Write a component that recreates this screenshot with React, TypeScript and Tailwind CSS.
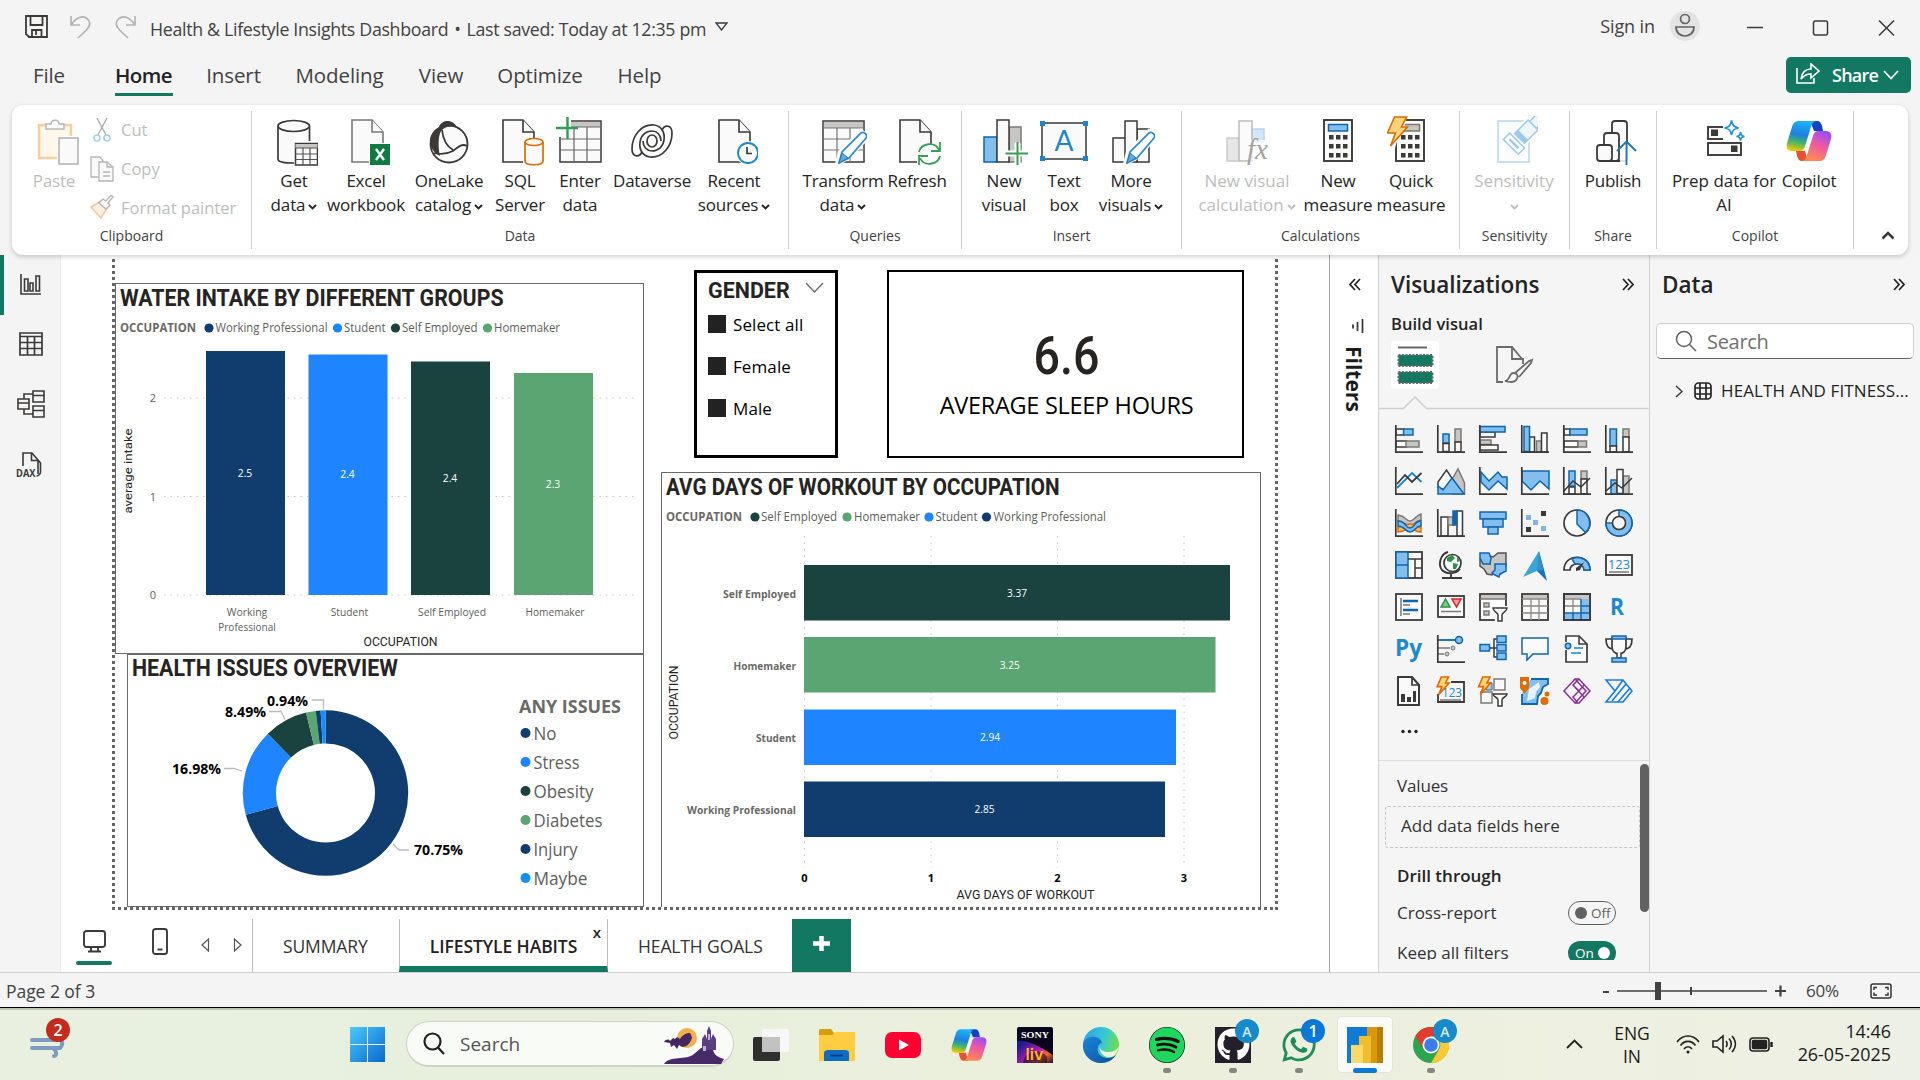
import React from "react";
import { FaGithub, FaWhatsapp, FaSpotify } from "react-icons/fa6";

const K = "#3b3a39";
const B = "#0f66b0";
const F = "#83beec";
const G = "#7a7977";
const L = "#c8c6c4";
const W = "#fafafa";
const NAVY = "#103d6d";
const BLUE = "#1f84ff";
const DARK = "#1a423f";
const GREEN = "#5aa572";
const TEAL = "#127862";

type Kids = { children?: React.ReactNode };

/* ---------- shared drawing helpers ---------- */

function Bx({ r, f = W, s = K, sw = 1.5 }: { r: number[]; f?: string; s?: string; sw?: number }) {
  return <rect x={r[0]} y={r[1]} width={r[2]} height={r[3]} fill={f} stroke={s} strokeWidth={sw} />;
}

function Ln({ d, s = K, sw = 1.5, f = "none" }: { d: string; s?: string; sw?: number; f?: string }) {
  return <path d={d} fill={f} stroke={s} strokeWidth={sw} />;
}

function Txt({
  x, y, w, size, children, fill = "#605e5c", weight = 400, anchor = "start", font = "Open Sans",
}: {
  x: number; y: number; w?: number; size: number; children: string; fill?: string; weight?: number;
  anchor?: "start" | "middle" | "end"; font?: string;
}) {
  return (
    <text
      x={x} y={y} fontSize={size} fill={fill} fontWeight={weight} textAnchor={anchor}
      fontFamily={`${font}, sans-serif`} textLength={w} lengthAdjust="spacingAndGlyphs"
    >
      {children}
    </text>
  );
}

function Page({ x = 9, y = 4, w = 31, s = K }: { x?: number; y?: number; w?: number; s?: string }) {
  const h = 42;
  return (
    <g fill={W} stroke={s} strokeWidth="1.6">
      <path d={`M${x} ${y}h${w - 11}l11 12v${h - 12}h${-w}z`} />
      <path d={`M${x + w - 11} ${y}v12h11`} />
    </g>
  );
}

function Bolt({ x, y, k = 1 }: { x: number; y: number; k?: number }) {
  return (
    <path
      transform={`translate(${x} ${y}) scale(${k})`}
      d="M8 0h12l-5 10h6L4 29l5-13H1z" fill="#fcd37a" stroke="#de6c00" strokeWidth={1.6 / k}
    />
  );
}

function Copilot({ className, id }: { className: string; id: string }) {
  return (
    <svg className={className} viewBox="0 0 46 42">
      <defs>
        <linearGradient id={`${id}a`} x1="0.5" y1="0" x2="0.3" y2="1">
          <stop offset="0" stopColor="#1fb4f4" /><stop offset="0.45" stopColor="#1b7fe0" />
          <stop offset="0.7" stopColor="#3fb56c" /><stop offset="1" stopColor="#f6c800" />
        </linearGradient>
        <linearGradient id={`${id}b`} x1="0.7" y1="0" x2="0.3" y2="1">
          <stop offset="0" stopColor="#9a4df5" /><stop offset="0.45" stopColor="#ef5aa0" />
          <stop offset="1" stopColor="#ff8f4a" />
        </linearGradient>
      </defs>
      <path d="M24 1h7c3 0 4 2 5 5l1 5h-9z" fill="#1542c0" />
      <path d="M22 41h-6c-3 0-4-2-5-5l-1-5h9z" fill="#e8502f" />
      <path d="M13 1h18c-4 0-5 3-6 6l-6 19c-1 4-3 5-6 5H6c-5 0-6-4-5-8L6 7c1-4 3-6 7-6z" fill={`url(#${id}a)`} />
      <path d="M33 41H15c4 0 5-3 6-6l6-19c1-4 3-5 6-5h7c5 0 6 4 5 8l-5 16c-1 4-3 6-7 6z" fill={`url(#${id}b)`} />
      <path d="M24 12h7c-4 0-4 2-5 5l-4 12h-5c3 0 3-2 4-5z" fill="#fff" />
    </svg>
  );
}

/* ---------- ribbon icons, 48 x 50 ---------- */

const Ri = ({ children }: Kids) => <svg className="h-[50px] w-12 shrink-0" viewBox="0 0 48 50">{children}</svg>;

const icoPaste = (
  <Ri>
    <path d="M8 9h32v33H8z" fill="#fff7ea" stroke="#f6cfa0" strokeWidth="2.5" />
    <path d="M15 13V8h5c0-5 8-5 8 0h5v5z" fill={W} stroke="#b9b9b9" strokeWidth="1.5" />
    <rect x="26" y="20" width="22" height="28" fill="#fff" />
    <rect x="28" y="22" width="19" height="26" fill={W} stroke="#b0b0b0" strokeWidth="1.5" />
  </Ri>
);
const icoGet = (
  <Ri>
    <path d="M8 10v33c0 3 6 4 16 4V10z" fill={W} /><path d="M24 47C14 47 8 46 8 43V10M39.500 10v15" fill="none" stroke={K} strokeWidth="1.7" />
    <ellipse cx="23.700" cy="10" rx="15.700" ry="5.500" fill={W} stroke={K} strokeWidth="1.700" />
    <rect x="24" y="27" width="24" height="23" fill="#fff" /><Bx r={[25.500, 27.500, 22, 21.500]} /><path d="M25.500 28h22v4h-22z" fill={L} />
    <Ln d="M25.500 32h22M25.500 38h22M25.500 43.500h22M33 32v17M40 32v17" sw={1.200} s="#555" />
  </Ri>
);
const icoExcel = (
  <Ri><Page x={10} w={31} s={G} /><rect x="27" y="27" width="21" height="23" fill="#fff" /><rect x="28" y="28" width="20" height="21" fill="#107c41" />
    <Ln d="M34 33l8 11M42 33l-8 11" s="#fff" sw={2.400} /></Ri>
);
const icoLake = (
  <Ri>
    <circle cx="24" cy="28" r="18.500" fill={W} stroke={K} strokeWidth="1.800" />
    <path d="M14 11C17 3 29 3 32 12c-6-3-13-1-16 3-3 5-3 17-1 25C3 34 1 18 14 11z" fill={K} />
    <path d="M17 14c1 10 6 17 11 20M9 37c8 2 13 1 19-2 5-4 9-8 14-5" fill="none" stroke={K} strokeWidth="1.800" />
  </Ri>
);
const icoSql = (
  <Ri><Page x={7} w={31} /><path d="M27 24h21v26H27z" fill="#fff" /><path d="M29 26v19c0 5 18 5 18 0V26" fill={W} stroke="#de6c00" strokeWidth="1.700" />
    <ellipse cx="38" cy="26" rx="9" ry="3.500" fill={W} stroke="#de6c00" strokeWidth="1.700" /></Ri>
);
const icoEnter = (
  <Ri><Bx r={[4, 5, 41, 41]} /><path d="M5 6h39v5H5z" fill={L} /><Ln d="M4 11h41M4 23h41M4 34h41M18 11v35M31 11v35" sw={1.200} s="#666" />
    <path d="M0 1h15v20H0z" fill="#fff" /><Ln d="M11.500 1v22M0 12h22" s="#2f9e4f" sw={2.400} /></Ri>
);
const icoDv = (
  <Ri><g fill="none" stroke={K} strokeWidth="1.700">
    <ellipse cx="24" cy="25" rx="5" ry="6" fill={W} />
    <path d="M26 9C13 8 4 20 4 33c0 8 7 9 10 3M22 41c13 1 22-11 22-24 0-8-7-9-10-3" />
    <path d="M26 9c8 1 11 8 10 15-1 7-6 11-12 11-5 0-9-4-9-10M22 41c-8-1-11-8-10-15 1-7 6-11 12-11 5 0 9 4 9 10" />
  </g></Ri>
);
const icoRecent = (
  <Ri><Page x={9} w={31} /><circle cx="38" cy="37" r="12" fill="#fff" /><circle cx="38" cy="37" r="10" fill={W} stroke="#1b86cc" strokeWidth="1.800" />
    <Ln d="M37 31v6.500h5" sw={1.700} /></Ri>
);
const Pencil = () => (
  <g><path d="M18 48l3-12L42 15l7 6-20 21z" fill="#fff" stroke="#fff" strokeWidth="4" /><path d="M20 47l3-11L42 17c3-2 7 2 5 5L30 42z" fill={W} stroke="#2a8ad0" strokeWidth="1.700" /><path d="M20 47l3-10 6 5z" fill="#5eabe4" stroke="#1b78c0" /></g>
);
const icoTransform = (
  <Ri><Bx r={[4, 5, 41, 41]} /><path d="M5 6h39v6H5z" fill={L} /><Ln d="M4 12h41M4 23h41M4 34h41M18 12v34M31 12v34" sw={1.200} s="#777" /><Pencil /></Ri>
);
const icoRefresh = (
  <Ri><Page x={7} w={31} /><path d="M24 28h24v22H24z" fill="#fff" /><Ln d="M26 36c2-9 16-11 20-2M47 26v9h-9M47 40c-2 9-16 11-20 2M26 49v-9h9" s="#3a9d57" sw={1.800} /></Ri>
);
const icoNewVisual = (
  <Ri><Bx r={[4, 21, 13, 25]} f={F} s={B} /><Bx r={[29, 11, 12, 35]} f={L} s={G} /><Bx r={[17, 4, 12, 42]} />
    <path d="M35 27h5v23h-5zM24 35h24v5H24z" fill="#fff" stroke="#fff" /><Ln d="M37.500 26v23M25.500 37.500h23" s="#3a9d57" sw={2} /></Ri>
);
const icoTextBox = (
  <Ri><Bx r={[2, 7, 44, 36]} />
    {[[0, 5], [43, 5], [0, 40], [43, 40]].map(([x, y]) => <rect key={`${x}${y}`} x={x} y={y} width="5" height="5" fill="#1b86cc" />)}
    <Txt x={24} y={35} size={28} fill="#1b86cc" anchor="middle" font="Lato">A</Txt></Ri>
);
const icoMore = (
  <Ri><Bx r={[6, 22, 13, 24]} /><Bx r={[30, 13, 12, 33]} /><Bx r={[18, 5, 12, 41]} /><Pencil /></Ri>
);
const icoCalc = (
  <Ri><g opacity="0.75"><Bx r={[4, 22, 12, 23]} f="#dedede" s="#bbb" /><Bx r={[29, 13, 12, 13]} f="#c3dff5" s="#9cc8ea" /><Bx r={[16, 5, 13, 40]} s="#a5a5a5" /></g>
    <path d="M25 24h23v24H25z" fill="#fff" opacity="0.7" /><text x="24" y="43" fontSize="29" fontStyle="italic" fill="#a3a3a3" fontFamily="Liberation Serif, serif">fx</text></Ri>
);
const Calc = ({ x, blue }: { x: number; blue?: boolean }) => (
  <g><Bx r={[x, 4, 28, 41]} sw={1.900} /><Bx r={[x + 4.500, 8.500, 19, 6.500]} f={blue ? F : L} s={blue ? B : G} />
    {[19, 28, 37].map((y) => [5, 12, 19].map((q) => <rect key={`${y}${q}`} x={x + q} y={y} width="4.500" height="4.500" fill={K} />))}</g>
);
const icoMeasure = <Ri><Calc x={10} blue /></Ri>;
const icoQuick = <Ri><Calc x={9} /><path d="M-2 0h22l-3 12h-3L8 32H-2z" fill="#fff" /><Bolt x={-0.500} y={1} /></Ri>;
const icoSens = (
  <Ri><path d="M8 5h31v41H8z" fill="#fafcfe" stroke="#b5d6ee" strokeWidth="1.500" />
    <g transform="rotate(45 36 16)"><path d="M29 6h14v19H29z" fill="#eef6fc" stroke="#fff" strokeWidth="5" /><path d="M31-4h10v10H31z" fill="#eef6fc" stroke="#9ccaea" strokeWidth="1.500" /><path d="M29 6h14v19H29z" fill="#eef6fc" stroke="#9ccaea" strokeWidth="1.500" /><path d="M29 20h14v5H29z" fill="#9ccaea" /></g>
    <g transform="rotate(45 24 27)"><rect x="14" y="23" width="21" height="9" fill="#fff" stroke="#9ccaea" strokeWidth="1.500" /><Ln d="M18 27.500h13" s="#9ccaea" sw={2.500} /></g></Ri>
);
const icoPublish = (
  <Ri><g fill={W} stroke={K} strokeWidth="1.800"><rect x="23" y="5" width="15" height="40" rx="3" /><rect x="15" y="17" width="15" height="28" rx="3" /><rect x="8" y="29" width="15" height="16" rx="3" /></g>
    <path d="M31 26h16v22H31z" fill="#fff" opacity="0.85" /><Ln d="M37.500 49V26M28 35l9.500-9.500L47 35" s="#1b78b8" sw={1.900} /></Ri>
);
const icoPrep = (
  <Ri><Bx r={[8, 11, 33, 12]} sw={1.900} /><Bx r={[8, 27, 33, 12]} sw={1.900} /><path d="M11 13.500h7v6.500h-7zM31 29.500h6.500v6.500H31z" fill={K} />
    <path d="M23 4h22v20H23z" fill="#fff" /><path d="M31.500 4.500c1 5 2 6 7 7.500-5 1-6 2-7 7-1-5-2-6-7-7 5-1 6-2 7-7.500zM40.500 16c.7 3 1 4 4 4.500-3 .6-3.500 1-4 4-.6-3-1-3.500-4-4 3-.6 3.500-1 4-4.500z" fill="#fff" stroke="#1f93d8" strokeWidth="1.700" /></Ri>
);

/* ---------- ribbon ---------- */

function Caret({ className = "" }: { className?: string }) {
  return <svg className={`inline-block h-[6px] w-[9px] ${className}`} viewBox="0 0 9 6"><path d="M1 1l3.500 3.500L8 1" fill="none" stroke="currentColor" strokeWidth="1.900" /></svg>;
}

function Btn({ icon, a, b, caret, cls }: { icon: React.ReactNode; a: string; b?: string; caret?: boolean; cls: string }) {
  return (
    <button className={`flex shrink-0 flex-col items-center whitespace-nowrap text-[17px] leading-6 ${cls}`}>
      {icon}
      <span className="mt-[3px] tracking-[-0.22px]">{a}</span>
      <span className="flex h-6 items-center justify-center gap-[3px] tracking-[-0.12px]">{b}{caret && <Caret className="mt-[3px]" />}</span>
    </button>
  );
}

function Group({ label, cls, children }: Kids & { label: string; cls: string }) {
  return (
    <section className={`my-[6px] flex shrink-0 flex-col border-r border-[#d1d1d1] ${cls}`}>
      <div className="flex h-[113px] pt-[5px]">{children}</div>
      <div className="text-center text-[14px] leading-6 text-[#424242]">{label}</div>
    </section>
  );
}

function Ribbon() {
  return (
    <div className="relative z-10 mx-3 flex h-[150px] rounded-[11px] bg-white text-[#242424] shadow-[0_2px_5px_rgba(0,0,0,0.18)]">
      <Group label="Clipboard" cls="w-[240px]">
        <Btn icon={icoPaste} a="Paste" cls="ml-[12px] w-[60px] text-[#bdbdbd] [&>svg]:ml-[2px]" />
        <div className="ml-[6px] flex flex-col pt-px text-[16.500px] text-[#bdbdbd]">
          <div className="flex h-[39px] items-start gap-[7px]">
            <svg className="h-[26px] w-[24px]" viewBox="0 0 24 26"><Ln d="M7 1l9 17M17 1L8 18" s="#a9a9a9" sw={1.300} /><circle cx="7" cy="21" r="3" fill="none" stroke="#a6cfea" strokeWidth="1.600" /><circle cx="17" cy="21" r="3" fill="none" stroke="#a6cfea" strokeWidth="1.600" /></svg><span className="mt-px">Cut</span>
          </div>
          <div className="flex h-[39px] items-start gap-[7px]">
            <svg className="h-[26px] w-[24px]" viewBox="0 0 24 26"><path d="M1 1h9l3 4v16H1z" fill={W} stroke="#b5b5b5" strokeWidth="1.300" /><path d="M9 6h8l6 5v14H9z" fill={W} stroke="#b5b5b5" strokeWidth="1.300" /><Ln d="M17 6v5h6M13 16h7M13 20h7" s="#b5b5b5" sw={1.300} /></svg><span className="mt-px">Copy</span>
          </div>
          <div className="flex items-start gap-[7px]">
            <svg className="h-[24px] w-[24px]" viewBox="0 0 24 24"><path d="M1 12l10-6 6 7-6 10z" fill="#fdf0e2" stroke="#f4c79c" strokeWidth="1.500" /><path d="M9 8l4-4 3 2 5-6 2 2-5 6 2 2-4 4z" fill={W} stroke="#b5b5b5" strokeWidth="1.300" /></svg><span className="mt-px">Format painter</span>
          </div>
        </div>
      </Group>
      <Group label="Data" cls="w-[537px]">
        <Btn icon={icoGet} a="Get" b="data" caret cls="ml-[12px] w-[60px]" />
        <Btn icon={icoExcel} a="Excel" b="workbook" cls="ml-[2px] w-[80px]" />
        <Btn icon={icoLake} a="OneLake" b="catalog" caret cls="ml-[3px] w-[80px]" />
        <Btn icon={icoSql} a="SQL" b="Server" cls="ml-px w-[60px]" />
        <Btn icon={icoEnter} a="Enter" b="data" cls="ml-[3px] w-[54px]" />
        <Btn icon={icoDv} a="Dataverse" cls="ml-[5px] w-[80px]" />
        <Btn icon={icoRecent} a="Recent" b="sources" caret cls="ml-[2px] w-[80px]" />
      </Group>
      <Group label="Queries" cls="w-[173px]">
        <Btn icon={icoTransform} a="Transform" b="data" caret cls="ml-[12px] w-[84px]" />
        <Btn icon={icoRefresh} a="Refresh" cls="ml-px w-[62px]" />
      </Group>
      <Group label="Insert" cls="w-[220px]">
        <Btn icon={icoNewVisual} a="New" b="visual" cls="ml-[14px] w-[56px]" />
        <Btn icon={icoTextBox} a="Text" b="box" cls="ml-[7px] w-[50px]" />
        <Btn icon={icoMore} a="More" b="visuals" caret cls="ml-[7px] w-[70px]" />
      </Group>
      <Group label="Calculations" cls="w-[278px]">
        <Btn icon={icoCalc} a="New visual" b="calculation" caret cls="ml-[13px] w-[104px] text-[#bdbdbd] [&>span]:tracking-normal" />
        <Btn icon={icoMeasure} a="New" b="measure" cls="ml-[3px] w-[72px]" />
        <Btn icon={icoQuick} a="Quick" b="measure" cls="ml-[2px] w-[70px]" />
      </Group>
      <Group label="Sensitivity" cls="w-[110px]">
        <Btn icon={icoSens} a="Sensitivity" caret cls="ml-[9px] w-[90px] text-[#bdbdbd] [&>span]:tracking-normal" />
      </Group>
      <Group label="Share" cls="w-[87px]">
        <Btn icon={icoPublish} a="Publish" cls="ml-[8px] w-[70px]" />
      </Group>
      <Group label="Copilot" cls="w-[197px]">
        <Btn icon={icoPrep} a="Prep data for" b="AI" cls="ml-[12px] w-[110px] [&>span]:tracking-normal" />
        <Btn icon={<Copilot id="rib" className="mt-[4px] mb-[4px] h-[42px] w-[46px]" />} a="Copilot" cls="ml-0 w-[60px]" />
      </Group>
      <svg className="mt-[126px] ml-[27px] h-[9px] w-[14px]" viewBox="0 0 14 9"><path d="M1.500 7.500L7 2l5.500 5.500" fill="none" stroke={K} strokeWidth="2.500" /></svg>
    </div>
  );
}

/* ---------- title bar and menu ---------- */

function TitleBar() {
  return (
    <header className="flex h-14 shrink-0 items-start text-[#424242]">
      <svg className="mt-[15px] ml-[25px] h-[23px] w-[23px]" viewBox="0 0 23 23" fill="none" stroke={K} strokeWidth="1.800"><path d="M1 1h21v21H4l-3-3z" /><path d="M5.500 1v9h12V1M7 22v-7h9.500v7M11 15v5" /></svg>
      <svg className="mt-[15px] ml-[22px] h-[24px] w-[22px]" viewBox="0 0 22 24" fill="none" stroke="#b3b3b3" strokeWidth="1.700"><path d="M1 1v9h9M1.500 9.500C6 2 13 0 17.500 4c4 4 2 8-1 11L8 23" /></svg>
      <svg className="mt-[15px] ml-[22px] h-[24px] w-[22px]" viewBox="0 0 22 24" fill="none" stroke="#b3b3b3" strokeWidth="1.700"><path d="M21 1v9h-9M20.500 9.500C16 2 9 0 4.500 4c-4 4-2 8 1 11L14 23" /></svg>
      <div className="mt-[15px] ml-[14px] flex text-[17.800px] leading-7 tracking-[-0.320px] whitespace-nowrap">
        <span>Health &amp; Lifestyle Insights Dashboard</span><span className="mx-[6px]">•</span><span>Last saved: Today at 12:35 pm</span>
      </div>
      <svg className="mt-[22px] ml-[9px] h-[9px] w-[13px]" viewBox="0 0 13 9" fill="none" stroke={K} strokeWidth="1.300"><path d="M1 1h11L6.500 8z" /></svg>
      <div className="mt-[12px] ml-auto text-[18px] leading-7 tracking-[-0.100px]">Sign in</div>
      <div className="mt-[11px] ml-[15px] flex h-[30px] w-[30px] justify-center rounded-full bg-[#e3e3e3] pt-[2px]">
        <svg className="h-[25px] w-[20px]" viewBox="0 0 20 25" fill="none" stroke="#616161" strokeWidth="1.700"><circle cx="10" cy="6" r="4.500" /><path d="M1 14h18c0 12-18 12-18 0z" /></svg>
      </div>
      <svg className="mt-[20px] ml-[46px] mr-[25px] h-[16px] w-[149px]" viewBox="0 0 149 16" fill="none" stroke={K} strokeWidth="1.500"><path d="M1 7.500h16M133 .5l15 15M148 .5l-15 15" /><rect x="67.500" y="1" width="14" height="14" rx="2" /></svg>
    </header>
  );
}

function Menu() {
  const items: [string, string][] = [
    ["File", "ml-[34px] w-[30px]"], ["Home", "ml-[51px] w-[58px]"], ["Insert", "ml-[35px] w-[51px]"], ["Modeling", "ml-[37px] w-[87px]"],
    ["View", "ml-[36px] w-[44px]"], ["Optimize", "ml-[35px] w-[84px]"], ["Help", "ml-[36px] w-[43px]"],
  ];
  return (
    <nav className="mb-[8px] flex h-[41px] shrink-0 items-start text-[20.500px] leading-[38px] tracking-[-0.1px] whitespace-nowrap text-[#424242]">
      {items.map(([t, c]) => (
        <div key={t} className={`flex h-[41px] justify-center ${c} ${t === "Home" ? "font-semibold tracking-[-0.6px] text-[#242424]" : ""}`}>
          {t === "Home" ? <span className="h-[40px] w-[58px] border-b-[3px] border-[#127862]">{t}</span> : t}
        </div>
      ))}
      <button className="mt-px mr-[9px] ml-auto flex h-[36px] w-[125px] items-center rounded-[5px] bg-[#127862] pl-[10px] text-[18px] font-semibold tracking-[-0.75px] text-white">
        <svg className="mb-[3px] h-[21px] w-[24px]" viewBox="0 0 24 21" fill="none" stroke="#fff" strokeWidth="1.600"><path d="M1 5v15h17v-5" /><path d="M5 16C6 9 10 6 15 6V1l8 7-8 7v-4c-4 0-7 1-10 5z" /></svg>
        <span className="ml-[12px] w-[46px] text-left">Share</span>
        <svg className="ml-[5px] h-[10px] w-[16px]" viewBox="0 0 16 10" fill="none" stroke="#fff" strokeWidth="1.800"><path d="M1 1l7 7.500L15 1" /></svg>
      </button>
    </nav>
  );
}

/* ---------- left rail ---------- */

function Rail() {
  return (
    <aside className="flex w-[61px] shrink-0 flex-col border-r border-[#ebebeb] bg-[#f4f4f4]">
      <div className="flex h-[60px] items-start border-l-[4px] border-[#127862] pt-[19px] pl-[16px]">
        <svg className="h-[21px] w-[21px]" viewBox="0 0 21 21" fill="none" stroke={K} strokeWidth="1.600"><path d="M1 0v20h20M4.500 5h3.500v12H4.500zM10 9h3v8h-3zM16 2h3.500v15H16z" /></svg>
      </div>
      <svg className="mt-[17px] ml-[19px] h-[24px] w-[24px]" viewBox="0 0 24 24" fill="none" stroke={K} strokeWidth="1.700"><path d="M1 1h22v22H1zM1 4.500h22M1 10.500h22M1 16.500h22M8.500 4.500V23M15.500 4.500V23" /></svg>
      <svg className="mt-[34px] ml-[17px] h-[28px] w-[28px]" viewBox="0 0 28 28" fill="none" stroke={K} strokeWidth="1.600"><path d="M1 9h11v10H1zM1 13h11M16 1h11v11H16zM16 5.500h11M16 16h11v11H16zM16 20.500h11M7 9V4h9M7 19v5h9" /></svg>
      <svg className="mt-[34px] ml-[15px] h-[26px] w-[28px] overflow-visible" viewBox="0 0 28 26" fill="none" stroke={K} strokeWidth="1.600"><path d="M8 14V1h9l6 7v14M16.500 1v7.500H23M23 8l2.500 3v9c0 2-2 4-4 4" /><text x="1" y="24.500" fontSize="10.500" fontWeight="700" stroke="none" fill={K} textLength="19.500" lengthAdjust="spacingAndGlyphs" fontFamily="Open Sans, sans-serif">DAX</text></svg>
    </aside>
  );
}

/* ---------- report visuals ---------- */

const DIN = "origin-left font-['Roboto'] font-bold text-[#252423] whitespace-nowrap";

function Legend({ items, cls }: { items: [string, string, number, number, number][]; cls: string }) {
  return (
    <svg className={cls} viewBox="0 0 500 18">
      <Txt x={0} y={13} w={76} size={11.500} weight={700} fill="#6b6967">OCCUPATION</Txt>
      {items.map(([t, c, dot, x, w]) => (
        <g key={t}><circle cx={dot} cy="9" r="4.600" fill={c} /><Txt x={x} y={13} w={w} size={11.800}>{t}</Txt></g>
      ))}
    </svg>
  );
}

function WaterChart() {
  const bars: [string, string, number, number, string, number][] = [
    ["Working", "2.5", 91, 66, NAVY, 189], ["Student", "2.4", 193.500, 69.500, BLUE, 190],
    ["Self Employed", "2.4", 296, 76.500, DARK, 194], ["Homemaker", "2.3", 399, 88, GREEN, 200],
  ];
  return (
    <article className="h-[372px] w-[529px] border border-[#6b6967] bg-white pt-px pl-[4px]">
      <h3 className={`${DIN} mt-[-2px] scale-x-[0.909] text-[23.500px] leading-[30px]`}>WATER INTAKE BY DIFFERENT GROUPS</h3>
      <Legend cls="mt-[6px] h-[18px] w-[500px]" items={[["Working Professional", NAVY, 89, 95.500, 112], ["Student", BLUE, 217.500, 224, 41.500], ["Self Employed", DARK, 275.500, 282, 75.500], ["Homemaker", GREEN, 367.500, 374, 66]]} />
      <svg className="mt-[-52px] ml-[-5px] h-[368px] w-[525px]" viewBox="0 0 525 368">
        {[113, 211.500, 310].map((y, i) => (
          <g key={y}><line x1="49" x2="521" y1={y} y2={y} stroke="#c8c6c4" strokeWidth="1" strokeDasharray="1.500 5" /><Txt x={41} y={y + 4} size={11} anchor="end">{String(2 - i)}</Txt></g>
        ))}
        {bars.map(([t, v, x, y, c, ty]) => (
          <g key={t}>
            <rect x={x} y={y} width="79" height={310 - y} fill={c} />
            <Txt x={x + 39} y={ty + 3} w={14.500} size={11} fill="#fff" anchor="middle">{v}</Txt>
          </g>
        ))}
        <Txt x={132} y={331} w={40.500} size={10.500} anchor="middle">Working</Txt>
        <Txt x={132} y={346} w={57.500} size={10.500} anchor="middle">Professional</Txt>
        <Txt x={234.500} y={331} w={37.500} size={10.500} anchor="middle">Student</Txt>
        <Txt x={337} y={331} w={68} size={10.500} anchor="middle">Self Employed</Txt>
        <Txt x={440} y={331} w={59} size={10.500} anchor="middle">Homemaker</Txt>
        <Txt x={285.500} y={361} w={74} size={12.500} anchor="middle" font="Roboto" fill="#252423">OCCUPATION</Txt>
        <g transform="translate(17 186) rotate(-90)"><Txt x={0} y={0} w={85} size={11.500} anchor="middle" font="Roboto" fill="#252423">average intake</Txt></g>
      </svg>
    </article>
  );
}

function DonutChart() {
  const parts: [string, number, string][] = [["No", 70.75, NAVY], ["Stress", 16.98, BLUE], ["Obesity", 8.49, DARK], ["Diabetes", 1.89, GREEN], ["Injury", 0.95, NAVY], ["Maybe", 0.94, "#1090ff"]];
  const widths = [23, 46, 60, 69, 44, 54];
  const p = (r: number, t: number) => `${(197.500 + r * Math.sin(t * 2 * Math.PI)).toFixed(2)} ${(138 - r * Math.cos(t * 2 * Math.PI)).toFixed(2)}`;
  let acc = 0;
  return (
    <article className="ml-[12px] h-[253px] w-[517px] border border-[#6b6967] bg-white">
      <h3 className={`${DIN} mt-[-1px] ml-[4px] scale-x-[0.908] text-[23.500px] leading-[28px]`}>HEALTH ISSUES OVERVIEW</h3>
      <svg className="mt-[-27px] h-[251px] w-[515px]" viewBox="0 0 515 251">
        {parts.map(([t, v, c]) => {
          const a = acc / 100, b = (acc + v) / 100;
          acc += v;
          const big = v > 50 ? 1 : 0;
          return <path key={t} d={`M${p(82.700, a)}A82.700 82.700 0 ${big} 1 ${p(82.700, b)}L${p(49.500, b)}A49.500 49.500 0 ${big} 0 ${p(49.500, a)}z`} fill={c} />;
        })}
        <g fill="none" stroke="#bdbbb9" strokeWidth="1.300"><path d="M265 189l6 6h10M96 113.500h10l8 2.500M141 56.500h12l4 8M184 45h11.500v9" /></g>
        <Txt x={286} y={200} w={49} size={13.500} weight={700} fill="#000">70.75%</Txt>
        <Txt x={44} y={119} w={49} size={13.500} weight={700} fill="#000">16.98%</Txt>
        <Txt x={97} y={62} w={41} size={13.500} weight={700} fill="#000">8.49%</Txt>
        <Txt x={139} y={51} w={41} size={13.500} weight={700} fill="#000">0.94%</Txt>
        <Txt x={391} y={58} w={102} size={17} weight={700} fill="#6b6967">ANY ISSUES</Txt>
        {parts.map(([t, , c], i) => (
          <g key={t}><circle cx="397.500" cy={78 + i * 29} r="5" fill={c} /><Txt x={405.500} y={85 + i * 29} w={widths[i]} size={17.500}>{t}</Txt></g>
        ))}
      </svg>
    </article>
  );
}

function WorkoutChart() {
  const rows: [string, string, number, number, string, number][] = [
    ["Self Employed", "3.37", 92, 426, DARK, 73], ["Homemaker", "3.25", 164, 411.500, GREEN, 62.500],
    ["Student", "2.94", 236.500, 372, BLUE, 40], ["Working Professional", "2.85", 308.500, 361, NAVY, 109],
  ];
  return (
    <article className="h-[436px] w-[600px] border border-b-0 border-[#6b6967] bg-white">
      <h3 className={`${DIN} ml-[4px] scale-x-[0.879] text-[23.500px] leading-[28px]`}>AVG DAYS OF WORKOUT BY OCCUPATION</h3>
      <Legend cls="mt-[7px] ml-[4px] h-[18px] w-[500px]" items={[["Self Employed", DARK, 89, 95, 76], ["Homemaker", GREEN, 181, 188, 66], ["Student", BLUE, 263, 269.500, 42], ["Working Professional", NAVY, 320.500, 327.500, 112.500]]} />
      <svg className="mt-[-53px] h-[433px] w-[598px]" viewBox="0 0 598 433">
        {[142.500, 269, 395.500, 522].map((x, i) => (
          <g key={x}><line x1={x} x2={x} y1="63" y2="395" stroke="#c8c6c4" strokeDasharray="1.500 5" /><Txt x={x} y={409} size={11} weight={700} fill="#000" anchor="middle">{String(i)}</Txt></g>
        ))}
        {rows.map(([t, v, y, w, c, tw]) => (
          <g key={t}>
            <rect x="142" y={y} width={w} height="55.500" fill={c} />
            <Txt x={142 + w / 2} y={y + 31.500} w={20} size={11} fill="#fff" anchor="middle">{v}</Txt>
            <Txt x={134} y={y + 32.500} w={tw} size={11} weight={700} anchor="end" fill="#6b6967">{t}</Txt>
          </g>
        ))}
        <Txt x={363.500} y={426} w={138} size={12.500} font="Roboto" anchor="middle" fill="#252423">AVG DAYS OF WORKOUT</Txt>
        <g transform="translate(16 229.500) rotate(-90)"><Txt x={0} y={0} w={74} size={12} font="Roboto" anchor="middle" fill="#252423">OCCUPATION</Txt></g>
      </svg>
    </article>
  );
}

function GenderSlicer() {
  return (
    <article className="h-[188px] w-[144px] border-[3px] border-black bg-white pl-[11px]">
      <div className="flex h-[42px] justify-between pt-[4px]">
        <h3 className={`${DIN} mt-[-1px] w-[94px] scale-x-[0.955] text-[22.500px] leading-[28px]`}>GENDER</h3>
        <svg className="mt-[5px] mr-[11px] h-[11px] w-[19px]" viewBox="0 0 19 11" fill="none" stroke="#6b6967" strokeWidth="1.300"><path d="M1 1l8.500 9L18 1" /></svg>
      </div>
      {["Select all", "Female", "Male"].map((t) => (
        <label key={t} className="flex h-[42px] items-start gap-[7px] text-[17px] leading-[19px] tracking-[0.1px] text-black">
          <span className="h-[18px] w-[18px] bg-[#222]" />{t}
        </label>
      ))}
    </article>
  );
}

function Report() {
  return (
    <div className="flex h-[664px] pl-[51px]">
      <div className="mt-[4px] h-[652px] w-[3px] shrink-0 bg-[repeating-linear-gradient(to_bottom,#666_0_3px,transparent_3px_6px)]" />
      <div className="h-[655px] w-[1160px]">
        <div className="flex h-[652px]">
          <div className="flex w-[529px] flex-col pt-[28px]"><WaterChart /><DonutChart /></div>
          <div className="ml-[17px] flex w-[600px] flex-col pt-[15px]">
            <div className="mb-[14px] ml-[33px] flex gap-[49px]">
              <GenderSlicer />
              <article className="flex h-[188px] w-[357px] flex-col items-center border-2 border-black bg-white pt-[56px] pl-[2px]">
                <div className="scale-x-[0.88] font-['Roboto'] text-[53px] leading-[56px] font-medium text-[#252423]">6.6</div>
                <div className="mt-[5px] text-[23.500px] leading-[32px] tracking-[-0.300px] whitespace-nowrap text-black">AVERAGE SLEEP HOURS</div>
              </article>
            </div>
            <WorkoutChart />
          </div>
        </div>
        <div className="ml-[-3px] h-[3px] w-[1164px] bg-[repeating-linear-gradient(to_right,#666_0_3px,transparent_3px_6px)]" />
      </div>
      <div className="mt-[4px] h-[652px] w-[3px] shrink-0 bg-[repeating-linear-gradient(to_bottom,#666_0_3px,transparent_3px_6px)]" />
    </div>
  );
}

function PageTabs() {
  return (
    <div className="flex h-[53px] text-[17.500px] leading-[55px] tracking-[-0.12px] whitespace-nowrap text-[#333]">
      <div className="ml-[15px] flex w-[36px] flex-col items-center pt-[11px]">
        <svg className="h-[23px] w-[23px]" viewBox="0 0 23 23" fill="none" stroke={K} strokeWidth="1.900"><rect x="1" y="1" width="21" height="16" rx="2.500" /><path d="M8 17v4M15 17v4M5 21.500h13" /></svg>
        <div className="mt-[8px] h-[4px] w-[36px] rounded bg-[#127862]" />
      </div>
      <svg className="mt-[9px] ml-[40px] h-[27px] w-[16px]" viewBox="0 0 16 27" fill="none" stroke={K} strokeWidth="1.900"><rect x="1" y="1" width="14" height="25" rx="2.500" /><path d="M5.500 21.500h5" /></svg>
      <svg className="mt-[19px] ml-[33px] h-[14px] w-[41px]" viewBox="0 0 41 14" fill="none" stroke="#555" strokeWidth="1.200"><path d="M7.500 1v12L1 7zM33.500 1v12L40 7z" /></svg>
      <div className="ml-[10px] w-[147px] border-l border-[#bdbdbd] pl-[30px]">SUMMARY</div>
      <div className="relative w-[209px] border-x border-b-[6px] border-x-[#bdbdbd] border-b-[#127862] text-center font-semibold tracking-[-0.080px] text-[#222]">
        LIFESTYLE HABITS<span className="absolute top-[2px] right-[6px] text-[15px] leading-[22px]">x</span>
      </div>
      <div className="w-[184px] pl-[30px]">HEALTH GOALS</div>
      <div className="flex w-[59px] items-center justify-center bg-[#127862] pb-1"><svg className="h-[17px] w-[17px]" viewBox="0 0 17 17"><path d="M8.500 1v15M0 8.500h17" stroke="#fff" strokeWidth="4.500" /></svg></div>
    </div>
  );
}

/* ---------- visualization gallery icons, 28 x 28 ---------- */

const Ax = () => <Ln d="M.8 0v27.200H28" sw={1.700} />;
const tx = (t: string, x: number, y: number, size: number, w: number, weight = 400) => <Txt x={x} y={y} w={w} size={size} fill="#2088cc" weight={weight}>{t}</Txt>;

const gallery: React.ReactNode[] = [
  <><Bx r={[1, 4, 8, 6]} /><Bx r={[8.500, 4, 9.500, 6]} f={F} s={B} /><Bx r={[1, 16, 11, 6]} /><Bx r={[11, 16, 13, 6]} f={L} s={G} /><Ax /></>,
  <><Bx r={[6, 9, 6, 9]} f={F} s={B} /><Bx r={[6, 18.500, 6, 8]} /><Bx r={[18, 4, 6, 13]} f={L} s={G} /><Bx r={[18, 17, 6, 10]} /><Ax /></>,
  <><Bx r={[1, 7, 15, 5]} /><Bx r={[1, 1.500, 25, 5.500]} f={F} s={B} /><Bx r={[1, 15, 11, 4.500]} f={L} s={G} /><Bx r={[1, 20, 18, 5]} /><Ax /></>,
  <><Bx r={[8.500, 12, 5, 15]} /><Bx r={[3, 1.500, 5.500, 25]} f={F} s={B} /><Bx r={[15.500, 16, 5, 11]} f={L} s={G} /><Bx r={[20.500, 8, 5.500, 19]} /><Ax /></>,
  <><Bx r={[1, 4, 6, 6]} /><Bx r={[7, 4, 17, 6]} f={F} s={B} /><Bx r={[1, 16, 14, 6]} /><Bx r={[15, 16, 8.500, 6]} f={L} s={G} /><Ax /></>,
  <><Bx r={[5, 4, 6.500, 17]} f={F} s={B} /><Bx r={[5, 21, 6.500, 6]} /><Bx r={[18, 4, 6, 8]} f={L} s={G} /><Bx r={[18, 12, 6, 15]} /><Ax /></>,
  <><Ln d="M2 21L17 6l9.500 9" s="#1b86cc" sw={1.800} /><Ln d="M2 17l8-9 7 7 9.500-9" sw={1.800} /><Ax /></>,
  <><Ln d="M13 16L21 2l6.500 14v11H16z" f={L} s={G} /><Ln d="M1 20V15L9.500 3l8 12-6 10z" f={W} /><Ln d="M1 27v-8l5 4L15 11l12 16z" f={F} s={B} /></>,
  <><Ln d="M2 5l8 9 9-9 4 5h5v12l-9-8-9 9-8-8z" f={F} s={B} /><Ax /></>,
  <><Ln d="M1 4h27v18l-9-8-9 9-9-9z" f={F} s={B} /><Ax /></>,
  <><Bx r={[6, 4, 6, 15]} f={F} s={B} /><Bx r={[6, 20, 6, 7]} /><Bx r={[18, 4, 6, 8]} f={L} s={G} /><Bx r={[18, 12, 6, 15]} /><Ln d="M1 24l9-10 8 6 9-9" /><Ax /></>,
  <><Bx r={[6, 13, 6, 14]} f={F} s={B} /><Bx r={[18, 9, 6, 18]} f={L} s={G} /><Bx r={[12, 2.500, 6, 24]} /><Ln d="M1 24l9-8 7 5 10-10" /><Ax /></>,
  <><Ln d="M3 6c8 1 8 6 12 6s5-5 11-7v6c-6 0-7 6-11 6S9 12 3 12z" f={L} s={G} /><Ln d="M3 18c8 0 6-3 12-3s5 3 11 3v5c-7 0-7-4-11-4s-4 4-12 4z" f="#ffb45c" s="#de6c00" /><Ln d="M3 12c8 0 7 7 12 7s4-7 11-7v5c-6 0-6 6-11 6S10 17 3 17z" f={F} s={B} /><Ax /></>,
  <><Bx r={[4, 8, 7, 19]} /><Bx r={[11, 8, 5, 8]} f={L} s={G} /><Bx r={[20, 2, 5.500, 25]} /><Bx r={[16, 2, 3.500, 14]} f={B} s={B} /><Ax /></>,
  <><Bx r={[1, 3, 26, 7]} f={F} s={B} /><Bx r={[4, 10, 20, 8]} f={F} s={B} /><Bx r={[9, 18, 10, 7]} f={F} s={B} /></>,
  <><path d="M5 6h5v5H5zM12 11h5v5h-5zM20 17h5v5h-5z" fill="#7db6e6" /><path d="M20 2h5v5h-5zM5 18h5v5H5z" fill={K} /><Ax /></>,
  <><circle cx="14" cy="14" r="13" fill={W} stroke={K} strokeWidth="1.700" /><Ln d="M14 1a13 13 0 0 1 8.500 22.500L14 15z" f={F} s={B} /></>,
  <><circle cx="14" cy="14" r="13" fill={W} stroke={K} strokeWidth="1.700" /><Ln d="M14 1a13 13 0 1 1-13 13h6.500A6.500 6.500 0 1 0 14 7.500z" f={F} s={B} /><circle cx="14" cy="14" r="6.500" fill="#f5f5f5" stroke={K} strokeWidth="1.500" /></>,
  <><Bx r={[1, 1, 26, 26]} sw={1.800} /><Bx r={[1, 1, 12, 26]} f={F} s={B} /><Ln d="M1 14h12" s={B} /><Ln d="M13 8h14M20 8v19M20 17h7" /></>,
  <><circle cx="15.500" cy="12" r="8.500" fill={W} stroke={K} strokeWidth="1.700" /><path d="M10 7l5-3 3 3-4 4-4-1zM16 12l5 1-2 5h-3zM20 5l3 5-3 1z" fill="#2c9145" /><Ln d="M11 1C3 3 1 14 5 19c4 4 13 5 18-1M14 23v4M5 27h20" sw={1.900} /></>,
  <><Ln d="M11 5l3 1 5-4h8v13l-5 8-6-1-3 2-5-1-3-5-4-3V8l10 5z" f={L} s="#55534f" /><Ln d="M1 2h9l2 5-1 6H4L1 7z" f={F} s={B} /><Ln d="M16 13h11v7l-6 3-1 3-4-2-3-2 3-3z" f={F} s={B} /></>,
  <><path d="M18 0L2 26l14-6z" fill="#39a6d8" /><path d="M18 0l8 30-10-10z" fill="#1272c4" /><path d="M18 0l-2 20 6-1z" fill="#3292ce" /></>,
  <><Ln d="M1 19C1 2 27 2 27 19h-6c0-8-14-8-14 0z" f={W} sw={1.700} /><Ln d="M9 8c8-4 18 1 18 11h-6c0-4-4-7-9-6z" f={F} s={B} /><path d="M21 11l-4 8-4 1v-3z" fill={K} /></>,
  <><Bx r={[1, 4, 26, 20]} sw={1.800} />{tx("123", 3, 18, 13, 22)}<Ln d="M4 21h20" s={G} /></>,
  <><Bx r={[1, 1, 26, 26]} sw={1.800} /><Ln d="M6 5v18M8 12h7M8 21h7" s={G} /><Ln d="M8 8h15M8 17h15" s={B} sw={2.400} /></>,
  <><Bx r={[1, 3, 26, 21]} sw={1.800} /><Ln d="M4 14l4.500-8 4.500 8z" f="#7cc88c" s="#2c9145" /><Ln d="M15 6h9l-4.500 8z" f="#ff9a9a" s="#e02020" /><Ln d="M4 18.500h20" s={G} /></>,
  <><Bx r={[1, 1, 26, 26]} sw={1.800} /><path d="M2 2h24v4H2z" fill={L} /><Ln d="M1 6h26" s={G} /><Bx r={[5, 10, 5, 4]} f={L} s={G} /><Bx r={[5, 18, 5, 4]} f={L} s={G} /><path d="M13 13h15v15H16z" fill="#f5f5f5" /><Ln d="M15 15h13c0 4-5 4-5 7v6h-4v-6c0-3-5-3-5-7z" f={W} /></>,
  <><Bx r={[1, 1, 26, 26]} sw={1.800} /><path d="M2 2h24v4H2z" fill={L} /><path d="M1 6h26M1 13h26M1 20h26M10 6v21M18 6v21" stroke="#8a8886" strokeWidth="1.300" /></>,
  <><Bx r={[1, 1, 26, 26]} sw={1.800} /><path d="M2 2h24v4H2z" fill={L} /><path d="M18 6h9v21H1v-7h17z" fill={F} /><Ln d="M1 6h17M1 13h17M10 6v14" s="#8a8886" sw={1.300} /><Ln d="M18 27V6M1 20h26M10 20v7M18 13h9" s={B} /><Ln d="M1 1h26v26H1z" sw={1.800} /></>,
  tx("R", 5, 22, 24, 14, 700),
  tx("Py", 0, 21, 24, 27, 700),
  <><Ln d="M1 5h17" s={B} sw={1.800} /><circle cx="22" cy="5" r="3.500" fill={F} stroke={B} strokeWidth="1.500" /><Ln d="M1 13h12M1 19h6" s={G} /><circle cx="16" cy="13" r="2" fill={L} stroke={G} /><circle cx="10" cy="19" r="2" fill={L} stroke={G} /><Ax /></>,
  <><Ln d="M10 13h8M18 4h-3v18h3" /><Bx r={[1, 9.500, 9.500, 6.500]} f={F} s={B} /><Bx r={[18, 1, 9, 6.500]} f={F} s={B} /><Bx r={[18, 9.500, 9, 6.500]} f={F} s={B} /><Bx r={[18, 18, 9, 6.500]} f={F} s={B} /></>,
  <Ln d="M1 3h26v16H12l-6 6v-6H1z" f={W} s={B} />,
  <><Ln d="M3 7V1h13l8 8v18H3V15" f={W} sw={1.700} /><Ln d="M16 1v8h8" /><circle cx="5" cy="11" r="2.700" fill={F} stroke={B} strokeWidth="1.500" /><Ln d="M11 13h9M8 18h10" s="#1b86cc" /></>,
  <><Ln d="M7 4H1c0 7 3 10 7 10M21 4h6c0 7-3 10-7 10" sw={1.700} /><Ln d="M7 3h14v9c0 9-14 9-14 0z" f={W} sw={1.700} /><Ln d="M12 18v5h4v-5" f={W} /><Bx r={[7, 1, 14, 3]} f={F} s={B} /><Bx r={[7, 23, 14, 4]} f={F} s={B} /></>,
  <><Ln d="M3 0h14l7 8v20H3z" f={W} sw={2} /><Ln d="M17 0v8h7" sw={1.700} /><path d="M6 17h4v8H6zM12 20h4v5h-4zM18 14h3v11h-3z" fill={K} /></>,
  <><Ln d="M14 5h13v20H1V17" sw={1.800} />{tx("123", 5, 20, 13, 20)}<Ln d="M3 23h21" s={G} /><Bolt x={-0.500} y={0} k={0.600} /></>,
  <><Bx r={[15, 2, 11, 11]} s={G} /><Bx r={[2, 15, 11, 11]} s={G} /><path d="M8 6h5v7H7z" fill={L} stroke={B} /><Ln d="M15 17h13c0 3-5 3-5 6v6h-4v-6c0-3-5-3-5-6z" f={W} /><Bolt x={-1} y={0} k={0.600} /></>,
  <><Ln d="M10 2h17v5l-5 3-2 6-3 3-1 8H1V17" f={F} s={B} sw={1.800} /><path d="M8 12l10-7 1 5-4 5-1 6-8 3z" fill="#e9f3fb" /><path d="M-1 0h9v11l-4.500 6L-1 11z" fill="#de6c00" /><circle cx="3.500" cy="6" r="2" fill="#fff" /><circle cx="23.500" cy="24" r="4" fill="#de6c00" /><circle cx="26" cy="17" r="2.500" fill="#de6c00" /></>,
  <g fill="none" stroke="#8a2f96" strokeWidth="1.500"><path d="M12 2L1 14l11 12h4l11-12L16 2z" /><path d="M12 2l11 12-11 12M16 2L10 8l11 12M10 8l6 6-6 6 5 6M21 8l-5 6" /></g>,
  <g fill="none" stroke="#1a7ee0" strokeWidth="1.600"><path d="M1 3h17l9 11-9 11H1l9-11z" /><path d="M10 14L18 3M7 24L21 7M13 25L25 11" /></g>,
];

function Chev2({ left }: { left?: boolean }) {
  return <svg className="h-[13px] w-[12px]" viewBox="0 0 12 13" fill="none" stroke="#242424" strokeWidth="1.700"><path d={left ? "M6 1L1 6.500 6 12M11 1L6 6.500l5 5.500" : "M1 1l5 5.500L1 12M6 1l5 5.500L6 12"} /></svg>;
}

function FiltersPane() {
  return (
    <div className="flex w-[49px] shrink-0 flex-col items-start border-l border-[#a8a8a8] bg-white">
      <div className="mt-[23px] ml-[19px]"><Chev2 left /></div>
      <svg className="mt-[28px] ml-[21px] h-[14px] w-[13px]" viewBox="0 0 13 14" stroke="#333" strokeWidth="1.700"><path d="M11.500 0v14M6.500 3v9M2 5.500v4" /></svg>
      <div className="mt-[13px] ml-[11px] text-[21px] leading-[26px] font-bold text-[#1b1b1b] [writing-mode:vertical-rl]">Filters</div>
    </div>
  );
}

function VizPane() {
  return (
    <div className="flex w-[271px] shrink-0 flex-col border-l border-[#d1d1d1] bg-[#f5f5f5] text-[#242424]">
      <div className="flex items-center justify-between pt-[12px] pr-[15px] pl-[12px]">
        <h2 className="pt-px text-[22.500px] leading-[33px] font-semibold tracking-[-0.050px]">Visualizations</h2><Chev2 />
      </div>
      <div className="mt-[10px] pl-[12px] text-[16.500px] leading-[26px] font-semibold tracking-[0.050px]">Build visual</div>
      <div className="mt-[4px] flex pl-[12px]">
        <div className="flex h-[48px] w-[48px] justify-center rounded-[4px] bg-white pt-[5px]">
          <svg className="h-[38px] w-[37px]" viewBox="0 0 37 38"><Ln d="M1 1.500h29" s="#666" sw={2} /><g fill={TEAL} stroke="#666" strokeWidth="2" strokeDasharray="2 1.500"><rect x="1.500" y="9" width="34" height="11" /><rect x="1.500" y="26" width="34" height="11" /></g></svg>
        </div>
        <svg className="mt-[5px] ml-[57px] h-[38px] w-[38px]" viewBox="0 0 38 38" fill="none" stroke="#6a6a6a" strokeWidth="1.800"><path d="M7 36H1V1h15l10 12M16 1v12h11v5M9 35c5 0 4-9 9-8 5 0 5 8-2 9-2 0-4 0-7-1zM19 27L33 15l3-1-1 3-12 14" /></svg>
      </div>
      <svg className="mt-[7px] h-[14px] w-[270px]" viewBox="0 0 270 14" fill="none" stroke="#cfcfcf" strokeWidth="1.600"><path d="M0 12.500h24.500L36 1 47.500 12.500h222" /></svg>
      <div className="mt-[15px] ml-[16px] grid w-[238px] grid-cols-6 gap-[14px]">
        {gallery.map((g, i) => <svg key={i} className="h-[28px] w-[28px] overflow-visible" viewBox="0 0 28 28">{g}</svg>)}
      </div>
      <svg className="mt-[24px] ml-[22px] h-[5px] w-[18px]" viewBox="0 0 18 5" fill="#222"><circle cx="2" cy="2.500" r="1.700" /><circle cx="8.500" cy="2.500" r="1.700" /><circle cx="15" cy="2.500" r="1.700" /></svg>
      <div className="mt-[26px] flex h-[200px] overflow-hidden border-t border-[#dcdcdc] text-[17px] leading-[26px] tracking-[-0.010px] text-[#333]">
        <div className="w-[261px] pt-[12px] pl-[6px]">
          <div className="pl-[12px] tracking-[-0.15px]">Values</div>
          <div className="mt-[7px] flex h-[42px] items-center rounded-[3px] border border-dashed border-[#c4c4c4] pb-[2px] pl-[15px]">Add data fields here</div>
          <div className="mt-[15px] pl-[12px] font-semibold tracking-[-0.010px] text-[#242424]">Drill through</div>
          <div className="mt-[11px] flex items-center justify-between pr-[24px] pl-[12px]">Cross-report
            <span className="flex h-[24px] w-[48px] items-center gap-[4px] rounded-full border border-[#616161] pl-[6px] text-[13.500px] text-[#616161]"><i className="h-[12px] w-[12px] rounded-full bg-[#616161]" />Off</span></div>
          <div className="mt-[14px] flex items-center justify-between pr-[24px] pl-[12px]">Keep all filters
            <span className="flex h-[24px] w-[48px] items-center gap-[4px] rounded-full bg-[#127862] pl-[7px] text-[13.500px] text-white">On<i className="h-[12px] w-[12px] rounded-full bg-white" /></span></div>
        </div>
        <div className="mt-[3px] h-[148px] w-[9px] rounded-full bg-[#616161]" />
      </div>
    </div>
  );
}

function DataPane() {
  return (
    <div className="flex flex-1 flex-col border-l border-[#d1d1d1] bg-[#f5f5f5] text-[#242424]">
      <div className="flex items-center justify-between pt-[12px] pr-[15px] pl-[12px]">
        <h2 className="pt-px text-[22.500px] leading-[33px] font-semibold">Data</h2><Chev2 />
      </div>
      <div className="mt-[22px] ml-[6px] flex h-[36px] w-[258px] items-center rounded-[5px] border border-[#cfcfcf] border-b-[#616161] bg-white pl-[18px]">
        <svg className="h-[22px] w-[22px]" viewBox="0 0 22 22" fill="none" stroke="#616161" strokeWidth="1.500"><circle cx="9" cy="9" r="7.500" /><path d="M14.500 14.500L21 21" /></svg>
        <span className="mt-[2px] ml-[10px] text-[20px] leading-[30px] tracking-[-0.300px] text-[#707070]">Search</span>
      </div>
      <div className="mt-[18px] flex items-center pl-[25px] text-[17px] leading-[28px] tracking-[0.120px] whitespace-nowrap">
        <svg className="h-[13px] w-[8px]" viewBox="0 0 8 13" fill="none" stroke={K} strokeWidth="1.500"><path d="M1 1l6 5.500L1 12" /></svg>
        <svg className="mr-[9px] ml-[11px] h-[18px] w-[18px]" viewBox="0 0 18 18" fill="none" stroke="#242424" strokeWidth="1.700"><rect x="1" y="1" width="16" height="16" rx="3.500" /><path d="M6 1v16M12 1v16M1 6h16M1 12h16" /></svg>
        HEALTH AND FITNESS...
      </div>
    </div>
  );
}

function StatusBar() {
  return (
    <footer className="flex h-[35px] shrink-0 items-center border-t border-[#cfcfcf] bg-[#f4f4f4] pt-[2px] text-[17px] text-[#424242]">
      <span className="ml-[6px] text-[17.500px] tracking-[-0.050px]">Page 2 of 3</span>
      <svg className="ml-auto h-[18px] w-[184px]" viewBox="0 0 184 18" stroke="#424242"><path d="M0 10h6M172 9h11M177.500 3.500v11" strokeWidth="2.200" /><path d="M14 9h150" strokeWidth="1.300" /><path d="M55 0v18" strokeWidth="6" /><path d="M88 5v8" strokeWidth="2" /></svg>
      <span className="ml-[19px] w-[34px] tracking-[-0.250px]">60%</span>
      <svg className="mr-[28px] ml-[30px] h-[16px] w-[22px]" viewBox="0 0 22 16" fill="none" stroke="#333" strokeWidth="1.500"><rect x="1" y="1" width="20" height="14" rx="2" /><path d="M4 7V4.500h3M15 4.500h3V7M18 9.500V12h-3M7 12H4V9.500" /></svg>
    </footer>
  );
}

/* ---------- taskbar ---------- */

function TaskIcon({ cls, dot, badge, children }: Kids & { cls?: string; dot?: boolean; badge?: string }) {
  return (
    <div className={`relative flex h-[57px] w-[66px] shrink-0 items-center justify-center ${cls ?? ""}`}>
      {children}
      {dot && <i className="absolute bottom-0 left-[29px] h-[5px] w-[8px] rounded-full bg-[#84877f]" />}
      {badge && <b className={`absolute top-[3px] left-[35px] flex h-6 w-6 items-center justify-center rounded-full font-semibold ${badge === "1" ? "bg-[#0a78d6] text-[16px] text-white" : "bg-[#168acb] text-[14px] text-[#cfeaf8]"}`}>{badge}</b>}
    </div>
  );
}

const S36 = "h-9 w-9";

function Taskbar() {
  return (
    <div className="flex h-[73px] shrink-0 items-start border-t border-black bg-[linear-gradient(90deg,#e9f0e0,#e6f0dc_30%,#ecefdc_60%,#eef0e0_80%,#edf0e4)] text-[#1b1b1b]">
      <div className="flex h-[72px] w-full items-start border-t-2 border-[#bfc4b8] pt-[6px]">
        <div className="relative mt-[20px] ml-[30px] h-[22px] w-[36px]">
          <svg className="h-[22px] w-[36px]" viewBox="0 0 36 22" fill="none" stroke="#7f9bc0" strokeWidth="4" strokeLinecap="round"><path d="M2 4h22M2 12h28c4-4 2-10-3-8M18 12h5c4 3 4 8 1 8" /></svg>
          <b className="absolute top-[-18px] left-[16px] flex h-6 w-6 items-center justify-center rounded-full bg-[#c42b1c] text-[16px] font-semibold text-white">2</b>
        </div>
        <svg className="mt-[11px] ml-[284px] h-[35px] w-[35px]" viewBox="0 0 35 35"><defs><linearGradient id="win" x1="0" y1="0" x2="1" y2="1"><stop offset="0" stopColor="#4cc9fb" /><stop offset="1" stopColor="#0769cd" /></linearGradient></defs><path d="M0 0h17v17H0zM18 0h17v17H18zM0 18h17v17H0zM18 18h17v17H18z" fill="url(#win)" /></svg>
        <div className="mt-[5px] ml-[21px] flex h-[46px] w-[328px] items-center rounded-full border border-b-2 border-[#cdd3c6] bg-[#f9fbf6] pl-[16px]">
          <svg className="h-[23px] w-[22px]" viewBox="0 0 22 23" fill="none" stroke="#222" strokeWidth="2.200"><circle cx="9.500" cy="9.500" r="8" /><path d="M15 15.500l6 6.500" /></svg>
          <span className="mt-[2px] ml-[15px] text-[19px] text-[#555]">Search</span>
          <svg className="mt-[2px] mr-[9px] ml-auto h-[38px] w-[60px]" viewBox="0 0 60 38"><circle cx="23" cy="12" r="10" fill="#f2b04b" /><path d="M0 16c2-3 5-3 6-1l3-3 2 1 2-2 3 2c3-5 7-6 10-6l2 4c-1 6-5 10-10 10l-3-2-2 4-3-4-3 2-1-4z" fill="#452760" /><path d="M0 38c6-9 22-3 30-10l7-6h12c0 7 5 9 11 11l-3 5z" fill="#472a68" /><path d="M38 24V13l3-5 2 5V5l2-5 2 5v8l2-5 3 5v11z" fill="#5a4080" /><path d="M39 20h3v5h-3zM44 8h2v6h-2z" fill="#c9a9e0" /></svg>
        </div>
        <TaskIcon cls="ml-[4px]"><svg className="h-8 w-9" viewBox="0 0 36 32"><rect x="0" y="8" width="27" height="24" rx="2" fill="#2f2f2f" /><rect x="9" y="0" width="27" height="23" rx="2" fill="#f7f7f7" opacity="0.950" /><path d="M9 8h18v15H9z" fill="#c2c2c2" /></svg></TaskIcon>
        <TaskIcon><svg className="h-8 w-9" viewBox="0 0 36 32"><path d="M0 2c0-2 1-2 2-2h10l3 4v6H0z" fill="#d99c0a" /><path d="M0 6h13l4-3h19v29H0z" fill="#ffcd41" /><path d="M5 32V24c0-2 2-3 4-3h17c3 0 4 1 4 3v8z" fill="#0f6cc4" /><path d="M11 26.500h13" stroke="#073f86" strokeWidth="1.800" /></svg></TaskIcon>
        <TaskIcon><svg className="h-[26px] w-9" viewBox="0 0 36 26"><rect width="36" height="26" rx="7" fill="#f03" /><path d="M14 7.500l10 5.500-10 5.500z" fill="#fff" /></svg></TaskIcon>
        <TaskIcon><Copilot id="task" className="h-[34px] w-9" /></TaskIcon>
        <TaskIcon>
          <svg className={S36} viewBox="0 0 36 36"><defs><linearGradient id="liv" x1="0" y1="0.300" x2="1" y2="1"><stop offset="0" stopColor="#1c1a8c" /><stop offset="0.450" stopColor="#b01ab0" /><stop offset="0.700" stopColor="#f06a2a" /><stop offset="1" stopColor="#180a30" /></linearGradient></defs>
            <rect width="36" height="36" rx="2" fill="#07061a" /><path d="M0 14c10-2 24 6 36 14v8H0z" fill="url(#liv)" /><path d="M6 36c2-14 18-14 24-6v6z" fill="#160a20" opacity="0.600" /><Txt x={4} y={10.500} w={28} size={8} weight={700} fill="#fff" font="Liberation Serif">SONY</Txt><Txt x={8.500} y={33} w={18} size={16} weight={600} fill="#ffb91f" font="Inter">liv</Txt></svg>
        </TaskIcon>
        <TaskIcon>
          <svg className={S36} viewBox="0 0 36 36"><defs><linearGradient id="ed1" x1="0" y1="0" x2="1" y2="0.300"><stop offset="0" stopColor="#2f9fe8" /><stop offset="0.600" stopColor="#36c7d9" /><stop offset="1" stopColor="#6ade52" /></linearGradient><linearGradient id="ed2" x1="0" y1="0" x2="1" y2="1"><stop offset="0" stopColor="#1c86d8" /><stop offset="1" stopColor="#0c4fa0" /></linearGradient></defs>
            <circle cx="18" cy="18" r="18" fill="url(#ed1)" /><path d="M0 17c2-9 17-10 19-1-5 1-7 11 1 14 4 2 9 1 13-2-3 5-9 8-15 8C8 36-1 28 0 17z" fill="url(#ed2)" /><path d="M18 16c-3 3-1 9 7 9 5 0 8-2 11-5-1 4-3 7-5 9-9 5-18-6-13-13z" fill="#eef1df" /></svg>
        </TaskIcon>
        <TaskIcon dot><FaSpotify className="h-9 w-9 rounded-full bg-[#111] text-[#1ed75f]" /></TaskIcon>
        <TaskIcon dot badge="A"><div className="flex h-9 w-9 items-center justify-center bg-[#24202a]"><FaGithub className="h-[33px] w-[33px] text-white" /></div></TaskIcon>
        <TaskIcon dot badge="1"><FaWhatsapp className="h-[38px] w-[38px] text-[#1c8c5c]" /></TaskIcon>
        <TaskIcon>
          <div className="absolute inset-y-0 left-[5px] w-[56px] rounded-[5px] border border-[#e2e5da] bg-[#fafbf7]" />
          <svg className={`relative ${S36}`} viewBox="0 0 36 36"><rect width="36" height="36" fill="#0f7ad8" /><path d="M20 0h16v36H20z" fill="#d9980c" /><path d="M30 0h6v36h-6z" fill="#b97d06" /><path d="M12 9h12v27H12z" fill="#f0bd2c" /><path d="M4 18h12v18H4z" fill="#f9d968" /></svg>
          <i className="absolute bottom-0 left-[21px] h-[5px] w-6 rounded-full bg-[#0a78d6]" />
        </TaskIcon>
        <TaskIcon dot badge="A">
          <svg className={S36} viewBox="0 0 36 36"><circle cx="18" cy="18" r="18" fill="#2da44e" /><path d="M2.400 9A18 18 0 0 1 33.600 9H18a9 9 0 0 0-8 5z" fill="#e33b2e" /><path d="M33.600 9A18 18 0 0 1 18 36l8-13.500A9 9 0 0 0 18 9z" fill="#fcc934" /><path d="M2.400 9l8 13.500L18 9z" fill="#e33b2e" /><circle cx="18" cy="18" r="8.500" fill="#fff" /><circle cx="18" cy="18" r="6.800" fill="#3b7ded" /></svg>
        </TaskIcon>
        <svg className="mt-[23px] ml-[102px] h-[10px] w-[17px]" viewBox="0 0 17 10" fill="none" stroke="#222" strokeWidth="1.800"><path d="M1 9l7.500-7.500L16 9" /></svg>
        <div className="mt-[6px] ml-[28px] w-[42px] text-center text-[17.500px] leading-[23px]">ENG<br />IN</div>
        <svg className="mt-[19px] ml-[23px] h-[19px] w-[24px]" viewBox="0 0 24 19" fill="none" stroke="#222" strokeWidth="1.600"><path d="M1 7c6-8 16-8 22 0M4.500 10.500c4-5.500 11-5.500 15 0M8 14c2-3 6-3 8 0" /><circle cx="12" cy="17" r="1.500" fill="#222" stroke="none" /></svg>
        <svg className="mt-[18px] ml-[12px] h-[20px] w-[25px]" viewBox="0 0 25 20" fill="none" stroke="#222" strokeWidth="1.600"><path d="M1 7h4l6-5v16l-6-5H1zM14 7c1.500 2 1.500 4 0 6M17 4.500c3 3 3 8 0 11M20 2c4.500 5 4.500 11 0 16" /></svg>
        <svg className="mt-[21px] ml-[12px] h-[15px] w-[24px]" viewBox="0 0 24 15" fill="none" stroke="#222" strokeWidth="1.600"><rect x="1" y="1" width="19" height="13" rx="3" /><rect x="3.500" y="3.500" width="14" height="8" rx="1" fill="#222" /><path d="M22.500 5v5" strokeWidth="2.500" /></svg>
        <div className="mt-[4px] mr-[29px] ml-auto text-right text-[17.900px] leading-[23px] whitespace-nowrap">14:46<br />26-05-2025</div>
      </div>
    </div>
  );
}

export default function App() {
  return (
    <div className="flex h-[1080px] w-[1920px] flex-col overflow-hidden bg-[#f4f4f4] font-['Open_Sans',sans-serif]">
      <TitleBar />
      <Menu />
      <Ribbon />
      <main className="flex h-[717px] shrink-0">
        <Rail />
        <div className="w-[1268px] shrink-0 bg-white"><Report /><PageTabs /></div>
        <FiltersPane />
        <VizPane />
        <DataPane />
      </main>
      <StatusBar />
      <Taskbar />
    </div>
  );
}
